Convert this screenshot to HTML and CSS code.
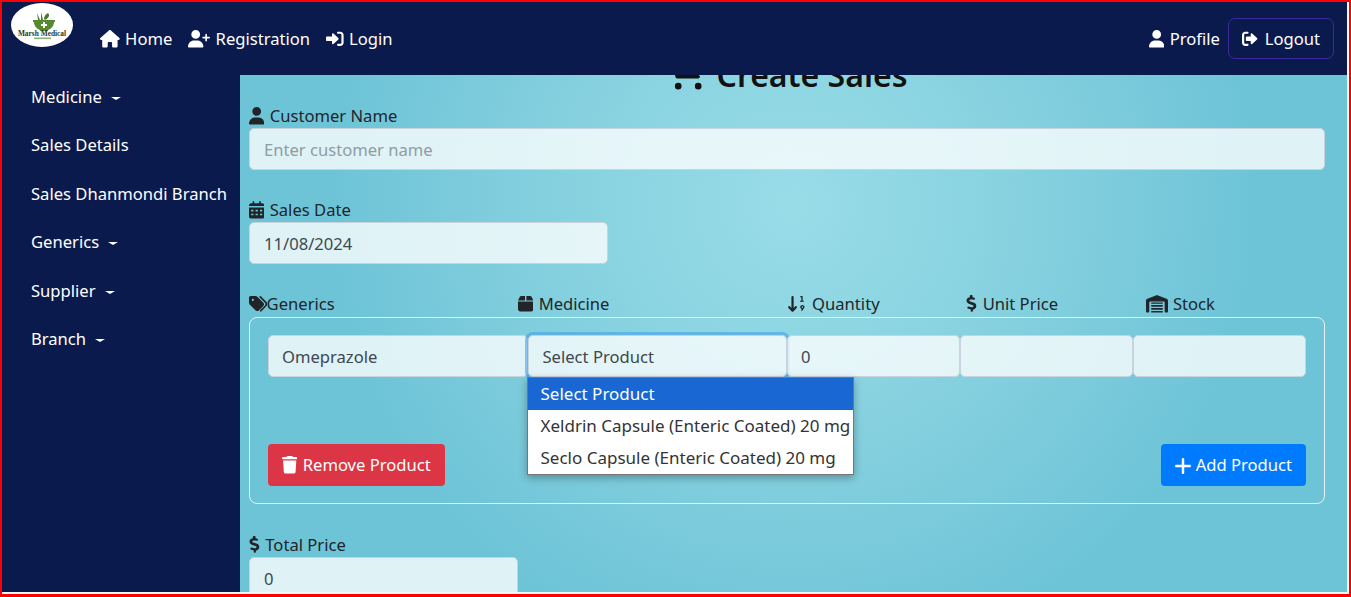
FILE: index.html

```html
<!DOCTYPE html>
<html lang="en">
<head>
    <meta charset="UTF-8">
    <meta name="viewport" content="width=device-width, initial-scale=1.0">
    <title>Create Sales</title>
    <link rel="stylesheet" href="styles.css">
</head>
<body>
    <div class="frame">
        <nav class="navbar">
            <svg class="logo" viewBox="0 0 62 44">
                <ellipse cx="31" cy="22" rx="31" ry="22" fill="#fff"/>
                <path d="M26 10l3 7h-2zM30 9l2 8h-2zM37 10c2 2 1 5-3 7l-1-1c0-3 2-5 4-6z" fill="#4c7a2c"/>
                <path d="M22 17h22v2h-1c0 4-3 7-6 8v1h-8v-1c-3-1-6-4-6-8h-1z" fill="#56892f"/>
                <path d="M32 19h2v2h2v2h-2v2h-2v-2h-2v-2h2z" fill="#fff"/>
                <text class="logo-name" x="31" y="33" text-anchor="middle">Marsh Medical</text>
                <rect x="23" y="34.5" width="17" height="1.6" fill="#8fb27a"/>
            </svg>
            <a class="nav-link" href="#"><svg class="ico" viewBox="0 0 576 512"><path d="M575.8 255.5c0 18-15 32.1-32 32.1h-32l.7 160.2c0 2.7-.2 5.4-.5 8.1V472c0 22.1-17.9 40-40 40H456c-1.1 0-2.2 0-3.3-.1c-1.4 .1-2.8 .1-4.2 .1H416 392c-22.1 0-40-17.9-40-40V448 384c0-17.7-14.3-32-32-32H256c-17.7 0-32 14.3-32 32v64 24c0 22.1-17.9 40-40 40H160 128.1c-1.5 0-3-.1-4.5-.2c-1.2 .1-2.4 .2-3.6 .2H104c-22.1 0-40-17.9-40-40V360c0-.9 0-1.9 .1-2.8V287.6H32c-18 0-32-14-32-32.1c0-9 3-17 10-24L266.4 8c7-7 15-8 22-8s15 2 21 7L564.8 231.5c8 7 12 15 11 24z"/></svg> Home</a>
            <a class="nav-link" href="#"><svg class="ico" viewBox="0 0 640 512"><path d="M224 256A128 128 0 1 0 224 0a128 128 0 1 0 0 256zm-45.7 48C79.8 304 0 383.8 0 482.3C0 498.7 13.3 512 29.7 512H418.3c16.4 0 29.7-13.3 29.7-29.7C448 383.8 368.2 304 269.7 304H178.3zM504 312V248H440c-13.3 0-24-10.7-24-24s10.7-24 24-24h64V136c0-13.3 10.7-24 24-24s24 10.7 24 24v64h64c13.3 0 24 10.7 24 24s-10.7 24-24 24H552v64c0 13.3-10.7 24-24 24s-24-10.7-24-24z"/></svg> Registration</a>
            <a class="nav-link" href="#"><svg class="ico" viewBox="0 0 512 512"><path d="M217 101l143 135c11 11 11 29 0 40L217 411c-15 14-41 4-41-17v-74H32c-18 0-32-14-32-32v-64c0-18 14-32 32-32h144v-74c0-21 26-31 41-17zM352 48h64c53 0 96 43 96 96v224c0 53-43 96-96 96h-64c-18 0-32-14-32-32s14-32 32-32h64c18 0 32-14 32-32V144c0-18-14-32-32-32h-64c-18 0-32-14-32-32s14-32 32-32z"/></svg> Login</a>
            <div class="nav-right">
                <a class="nav-link" href="#"><svg class="ico" viewBox="0 0 448 512"><path d="M224 256A128 128 0 1 0 224 0a128 128 0 1 0 0 256zm-45.7 48C79.8 304 0 383.8 0 482.3C0 498.7 13.3 512 29.7 512H418.3c16.4 0 29.7-13.3 29.7-29.7C448 383.8 368.2 304 269.7 304H178.3z"/></svg> Profile</a>
                <button class="logout"><svg class="ico" viewBox="0 0 512 512"><path d="M295 101l143 135c11 11 11 29 0 40L295 411c-15 14-41 4-41-17v-74H144c-18 0-32-14-32-32v-64c0-18 14-32 32-32h110v-74c0-21 26-31 41-17zM96 48h64c18 0 32 14 32 32s-14 32-32 32H96c-18 0-32 14-32 32v224c0 18 14 32 32 32h64c18 0 32 14 32 32s-14 32-32 32H96c-53 0-96-43-96-96V144c0-53 43-96 96-96z"/></svg> Logout</button>
            </div>
        </nav>

        <div class="page">
            <aside class="sidebar">
                <a class="side-link caret" href="#">Medicine</a>
                <a class="side-link" href="#">Sales Details</a>
                <a class="side-link" href="#">Sales Dhanmondi Branch</a>
                <a class="side-link caret" href="#">Generics</a>
                <a class="side-link caret" href="#">Supplier</a>
                <a class="side-link caret" href="#">Branch</a>
            </aside>

            <main class="content">
                <h2 class="title"><svg class="cart" viewBox="0 0 576 512"><path d="M0 24C0 11 11 0 24 0h45c23 0 43 15 50 36h411c21 0 37 20 31 41l-41 143c-6 21-24 36-46 36H171l9 48h284c13 0 24 11 24 24s-11 24-24 24H160c-12 0-22-8-24-20L72 50c-1-4-4-2-8-2H24C11 48 0 37 0 24zM128 464a48 48 0 1 1 96 0 48 48 0 1 1-96 0zm336-48a48 48 0 1 1 0 96 48 48 0 1 1 0-96z"/></svg>Create Sales</h2>

                <label class="field-label">
                    <svg class="ico" viewBox="0 0 448 512"><path d="M224 256A128 128 0 1 0 224 0a128 128 0 1 0 0 256zm-45.7 48C79.8 304 0 383.8 0 482.3C0 498.7 13.3 512 29.7 512H418.3c16.4 0 29.7-13.3 29.7-29.7C448 383.8 368.2 304 269.7 304H178.3z"/></svg> Customer Name
                </label>
                <input class="control" type="text" placeholder="Enter customer name">

                <label class="field-label gap-top">
                    <svg class="ico" viewBox="0 0 448 512"><path d="M128 0c13 0 24 11 24 24v40h144V24c0-13 11-24 24-24s24 11 24 24v40h40c35 0 64 29 64 64v16H0v-16c0-35 29-64 64-64h40V24c0-13 11-24 24-24zM0 192h448v256c0 35-29 64-64 64H64c-35 0-64-29-64-64zm64 64v48h64v-48zm128 0v48h64v-48zm128 0v48h64v-48zM64 368v48h64v-48zm128 0v48h64v-48zm128 0v48h64v-48z" fill-rule="evenodd"/></svg> Sales Date
                </label>
                <div class="date-wrap"><input class="control" type="text" value="11/08/2024"></div>

                <div class="col-labels gap-top">
                    <span class="field-label"><svg class="ico tags" viewBox="0 0 512 512"><path d="M0 80v149c0 17 7 33 19 45l176 176c25 25 65 25 90 0l133-133c25-25 25-65 0-90L242 51c-12-12-28-19-45-19H48C21 32 0 53 0 80zm112 32a32 32 0 1 1 0 64 32 32 0 1 1 0-64z" fill-rule="evenodd"/><path d="M311 39c9-9 25-9 34 0l152 152c40 40 40 105 0 145L356 477c-9 9-25 9-34 0s-9-25 0-34l141-141c21-21 21-55 0-76L311 73c-9-9-9-25 0-34z"/></svg>Generics</span>
                    <span class="field-label"><svg class="ico" viewBox="0 0 448 512"><path d="M50 60C58 44 75 32 94 32h110v128H0zM244 32h110c19 0 36 12 44 28l50 100H244zM0 192h448v224c0 35-29 64-64 64H64c-35 0-64-29-64-64z"/></svg> Medicine</span>
                    <span class="field-label"><svg class="ico" viewBox="0 0 576 512"><path d="M137 480l-96-104c-12-13-11-33 2-45s33-11 45 2l41 44V64c0-18 14-32 32-32s32 14 32 32v313l41-44c12-13 32-14 45-2s14 32 2 45l-96 104c-6 7-14 10-24 10s-18-3-24-10zM400 32h40c10 0 16 8 16 16v120h24c10 0 16 8 16 16s-6 16-16 16h-88c-10 0-16-8-16-16s6-16 16-16h24V64h-16c-10 0-16-8-16-16s6-16 16-16zM448 288c-35 0-64 29-64 64 0 30 21 55 50 62l-18 26c-6 8-4 18 4 23s18 4 23-4l46-68c14-18 23-26 23-39 0-35-29-64-64-64zm0 40a24 24 0 1 1 0 48 24 24 0 1 1 0-48z" fill-rule="evenodd"/></svg> Quantity</span>
                    <span class="field-label"><svg class="ico" viewBox="0 0 320 512"><path d="M160 0c18 0 32 14 32 32v35c17 2 34 6 50 11 17 5 26 23 21 40s-23 26-40 21c-24-7-48-11-68-11-17 0-33 4-44 11-10 6-15 14-15 23 0 7 3 13 15 20 15 9 36 15 63 23 24 7 55 16 79 31 26 17 47 44 47 84 0 38-20 67-47 84-15 9-33 15-51 18v35c0 18-14 32-32 32s-32-14-32-32v-37c-24-5-47-13-66-19l-12-4c-17-6-26-24-20-41s24-26 41-20l14 5c25 8 45 15 65 16 17 1 33-3 44-10 10-6 15-14 15-25 0-8-3-14-15-22-15-10-36-16-63-24-24-7-54-16-77-30-26-16-49-43-49-83 0-38 22-66 48-82 15-9 32-15 48-18V32c0-18 14-32 32-32z"/></svg> Unit Price</span>
                    <span class="field-label"><svg class="ico" viewBox="0 0 640 512"><path d="M0 488V171c0-26 16-49 40-59L308 5c8-3 16-3 24 0l268 107c24 10 40 33 40 59v317c0 13-11 24-24 24h-48c-13 0-24-11-24-24V224c0-18-14-32-32-32H128c-18 0-32 14-32 32v264c0 13-11 24-24 24H24c-13 0-24-11-24-24zM152 464h336v48H152zm0-88h336v56H152zm0-88h336v56H152zm0-72h336v40H152z"/></svg> Stock</span>
                </div>

                <div class="product-box">
                    <div class="product-row">
                        <input class="control generic-input" type="text" value="Omeprazole">
                        <div class="select-wrap">
                            <div class="control select-open">Select Product</div>
                            <ul class="dropdown">
                                <li class="active">Select Product</li>
                                <li>Xeldrin Capsule (Enteric Coated) 20 mg</li>
                                <li>Seclo Capsule (Enteric Coated) 20 mg</li>
                            </ul>
                        </div>
                        <input class="control after-select" type="text" value="0">
                        <input class="control after-select" type="text">
                        <input class="control after-select" type="text">
                    </div>
                    <div class="product-actions">
                        <button class="btn btn-danger"><svg class="ico" viewBox="0 0 448 512"><path d="M135 18C140 7 151 0 163 0h122c12 0 23 7 28 18l7 14h96c18 0 32 14 32 32s-14 32-32 32H32C14 96 0 82 0 64s14-32 32-32h96zM32 128h384l-21 339c-2 25-23 45-48 45H101c-25 0-46-20-48-45z"/></svg> Remove Product</button>
                        <button class="btn btn-primary"><svg class="ico ico-plus" viewBox="16 48 416 416"><path d="M256 80c0-18-14-32-32-32s-32 14-32 32v144H48c-18 0-32 14-32 32s14 32 32 32h144v144c0 18 14 32 32 32s32-14 32-32V288h144c18 0 32-14 32-32s-14-32-32-32H256z"/></svg> Add Product</button>
                    </div>
                </div>

                <label class="field-label total-label">
                    <svg class="ico" viewBox="0 0 320 512"><path d="M160 0c18 0 32 14 32 32v35c17 2 34 6 50 11 17 5 26 23 21 40s-23 26-40 21c-24-7-48-11-68-11-17 0-33 4-44 11-10 6-15 14-15 23 0 7 3 13 15 20 15 9 36 15 63 23 24 7 55 16 79 31 26 17 47 44 47 84 0 38-20 67-47 84-15 9-33 15-51 18v35c0 18-14 32-32 32s-32-14-32-32v-37c-24-5-47-13-66-19l-12-4c-17-6-26-24-20-41s24-26 41-20l14 5c25 8 45 15 65 16 17 1 33-3 44-10 10-6 15-14 15-25 0-8-3-14-15-22-15-10-36-16-63-24-24-7-54-16-77-30-26-16-49-43-49-83 0-38 22-66 48-82 15-9 32-15 48-18V32c0-18 14-32 32-32z"/></svg> Total Price
                </label>
                <div class="total-wrap"><input class="control" type="text" value="0"></div>
            </main>
        </div>
    </div>
</body>
</html>
```

FILE: styles.css

```css
* {
    box-sizing: border-box;
}

html, body {
    height: 100%;
    margin: 0;
    overflow: hidden;
}

body {
    font-family: "Noto Sans", "Open Sans", Arial, sans-serif;
    font-size: 16.6px;
    line-height: 24px;
    color: #212529;
    background: #fff;
}

.frame {
    height: 597px;
    border: 2px solid #f00;
    border-bottom-width: 3px;
    display: flex;
    flex-direction: column;
    background: #f4f6f7;
    padding: 0 0 2px 0;
}

.ico {
    width: auto;
    height: 17.6px;
    fill: currentColor;
    vertical-align: -3px;
    margin-right: 1px;
}

.tags {
    margin-right: 0;
}

/* top bar */
.navbar {
    height: 73px;
    background: #0b1a4d;
    display: flex;
    align-items: center;
    flex-shrink: 0;
    padding: 0 13px 0 9px;
    position: relative;
    z-index: 2;
    margin-right: 2px;
}

.logo {
    width: 62px;
    height: 44px;
    margin: -27px 27px 0 0;
    flex-shrink: 0;
}

.logo-name {
    font-family: "Liberation Serif", serif;
    font-weight: bold;
    font-size: 7.4px;
    fill: #2c3a22;
}

.nav-link {
    color: #fff;
    text-decoration: none;
    margin-right: 16px;
    white-space: nowrap;
}

.nav-right {
    margin-left: auto;
    display: flex;
    align-items: center;
}

.nav-right .nav-link {
    margin-right: 8px;
}

.logout {
    font: inherit;
    color: #fff;
    background: transparent;
    border: 1px solid #3a2a9c;
    border-radius: 7px;
    height: 41px;
    padding: 0 13px;
}

/* left menu */
.page {
    flex: 1;
    display: flex;
    min-height: 0;
    margin-right: 2px;
}

.sidebar {
    width: 238px;
    flex-shrink: 0;
    background: #0b1a4d;
    padding: 0 0 0 29px;
}

.side-link {
    display: block;
    color: #fff;
    text-decoration: none;
    height: 48.4px;
    line-height: 44px;
    white-space: nowrap;
}

.caret::after {
    content: "";
    display: inline-block;
    margin-left: 9px;
    vertical-align: 3px;
    border-top: 3.5px solid #fff;
    border-left: 5px solid transparent;
    border-right: 5px solid transparent;
}

/* form */
.content {
    flex: 1;
    min-width: 0;
    overflow: hidden;
    padding: 0 22px 0 9px;
    background: radial-gradient(circle at 50% 25%, #98dce7 0, #8ad3e1 28%, #6ec4d7 68%);
}

.title {
    margin: -21px 0 0;
    height: 50px;
    line-height: 40px;
    font-size: 32px;
    font-weight: 600;
    color: #111;
    text-align: center;
    white-space: nowrap;
}

.cart {
    width: 40px;
    height: 35.5px;
    fill: currentColor;
    vertical-align: -3px;
    margin-right: 10px;
}

.field-label {
    display: block;
    height: 24px;
    line-height: 24px;
    white-space: nowrap;
}

.gap-top {
    margin-top: 28px;
}

.control {
    display: block;
    width: 100%;
    height: 42px;
    font: inherit;
    color: #40474e;
    padding: 8px 14px;
    background: rgba(255, 255, 255, 0.78);
    border: 1px solid #c9d3de;
    border-radius: 5px;
    outline: none;
}

.control::placeholder {
    color: #8f9ca3;
}

.date-wrap {
    width: 359px;
}

.col-labels {
    display: grid;
    grid-template-columns: 3fr 3fr 2fr 2fr 2fr;
    height: 25px;
}

.product-box {
    height: 187px;
    border: 1px solid #e4f1f5;
    border-radius: 8px;
    padding: 17px 18px;
}

.product-row {
    display: grid;
    grid-template-columns: 3fr 3fr 2fr 2fr 2fr;
}

.generic-input {
    padding-left: 13px;
}

.select-wrap {
    position: relative;
}

.select-open {
    padding-top: 9px;
    line-height: 24px;
    box-shadow: 0 0 0 3px rgba(70, 160, 235, 0.6);
}

.after-select {
    position: relative;
    padding-left: 13px;
}

.dropdown {
    position: absolute;
    z-index: 3;
    top: 42px;
    left: -1px;
    width: 327px;
    margin: 0;
    padding: 0;
    list-style: none;
    background: #fff;
    border: 1px solid #767676;
    box-shadow: 0 3px 8px rgba(0, 0, 0, 0.3);
    color: #333;
    font-size: 17px;
}

.dropdown li {
    height: 32px;
    line-height: 32px;
    padding-left: 13px;
    white-space: nowrap;
}

.dropdown .active {
    background: #1967d2;
    color: #fff;
}

.product-actions {
    display: flex;
    justify-content: space-between;
    margin-top: 67px;
}

.btn {
    font: inherit;
    color: #fff;
    height: 42px;
    border: none;
    border-radius: 4px;
    padding: 0 14px;
}

.btn-danger {
    background: #dc3545;
}

.btn-primary {
    background: #007bff;
}

.ico-plus {
    height: 16px;
    margin-right: 0;
}

.total-label {
    margin-top: 29px;
}

.total-wrap {
    width: 269px;
}
```
